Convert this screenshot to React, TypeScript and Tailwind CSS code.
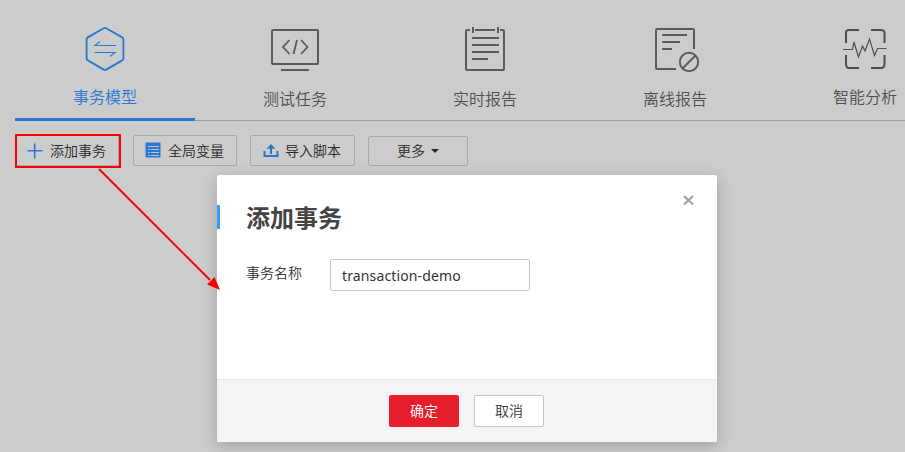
import type { ReactNode } from "react";

const HexIcon = () => (
  <svg width="44" height="48" viewBox="0 0 44 48" fill="none" stroke="#2878cf">
    <path transform="translate(0 -.6)" d="M20.8 3.9Q22 3.2 23.2 3.9L39.2 13Q40.4 13.7 40.4 15V34Q40.4 35.3 39.2 36L23.2 45.2Q22 45.9 20.8 45.2L4.8 36Q3.6 35.3 3.6 34V15Q3.6 13.7 4.8 13Z" strokeWidth="1.8" />
    <path d="M33 20.5H12L17 16.5M11.5 27.5H32L27 31.5" strokeWidth="1.1" />
  </svg>
);

const CodeIcon = () => (
  <svg width="50" height="48" viewBox="0 0 50 48" fill="none" stroke="#5b5b5b" strokeWidth="2">
    <rect x="2" y="5" width="46" height="34" rx="1" />
    <path d="M11 45H39" />
    <path d="M19.5 15L13 22L19.5 29M31 15L37.5 22L31 29M27 15L23.5 29" strokeWidth="1.8" />
  </svg>
);

const NoteIcon = () => (
  <svg width="44" height="48" viewBox="0 0 44 48" fill="none" stroke="#5b5b5b" strokeWidth="2">
    <path d="M7 5H4Q3 5 3 6V44Q3 45 4 45H40Q41 45 41 44V6Q41 5 40 5H37M12 5H32" />
    <path d="M10 2V8M35 2V8M9 13H36M9 20H36M9 27H36M9 34H25" />
  </svg>
);

const OfflineIcon = () => (
  <svg width="50" height="48" viewBox="0 0 50 48" fill="none" stroke="#5b5b5b" strokeWidth="2">
    <path d="M26 44H7Q6 44 6 43V5Q6 4 7 4H43Q44 4 44 5V24" />
    <path d="M12 10H37M12 17H30M12 24H22" />
    <circle cx="39" cy="37" r="9.2" strokeWidth="1.9" />
    <path d="M32.5 43.5L45.5 30.5" strokeWidth="1.9" />
  </svg>
);

const PulseIcon = () => (
  <svg width="44" height="48" viewBox="0 0 44 48" fill="none" stroke="#505050">
    <path d="M16 5H6Q3 5 3 8V18M28 5H38Q41.5 5 41.5 8V18M41.5 30V39Q41.5 43 38 43H28M16 43H6Q3 43 3 39V30" strokeWidth="2" />
    <path d="M0 24.5H9.5L11 17L15.5 32L19.5 21L22 26L26.5 14L31.5 30.5L34.5 23.5H43.5" strokeWidth="1.2" />
  </svg>
);

const PlusIcon = () => (
  <svg width="16" height="16" viewBox="0 0 16 16" fill="none" stroke="#2878cf" strokeWidth="1.5">
    <path d="M7.7 .5V15.5M.5 7.7H15.5" />
  </svg>
);

const TableIcon = () => (
  <svg className="-mt-[2px]" width="16" height="16" viewBox="0 0 16 16" fill="none">
    <rect x=".5" y=".5" width="15" height="15" fill="#2878cf" />
    <path d="M3 4.5H14M3 7.5H5M6 7.5H14M3 10.5H5M6 10.5H14M3 13.5H5M6 13.5H14" stroke="#b9c5d5" strokeWidth="1" />
  </svg>
);

const ImportIcon = () => (
  <svg width="16" height="16" viewBox="0 0 16 16" fill="#2878cf">
    <path d="M8 1L12.5 5.7H9V11H7V5.7H3.5Z" />
    <path d="M.5 8H2.5V12H13.5V8H15.5V14H.5Z" />
  </svg>
);

const tabs: { label: string; icon: ReactNode; style: string }[] = [
  { label: "事务模型", icon: <HexIcon />, style: "text-[#2878cf] pb-[12px]" },
  { label: "测试任务", icon: <CodeIcon />, style: "text-[#505050] pb-[10px]" },
  { label: "实时报告", icon: <NoteIcon />, style: "text-[#505050] pb-[10px]" },
  { label: "离线报告", icon: <OfflineIcon />, style: "text-[#505050] pb-[10px]" },
  { label: "智能分析", icon: <PulseIcon />, style: "text-[#505050] pb-[12px]" },
];

function Toolbar() {
  const button = "flex items-center rounded-xs border border-[#a9a9a9] text-[14px] text-[#292929]";
  return (
    <div className="flex h-[34px] items-start pl-[15px]">
      <button className="flex h-[34px] w-[106px] items-center gap-[7px] border-2 border-[#fa0000] pl-[10px] text-[14px] text-[#292929] shadow-[inset_-1px_-1px_0_#a9a9a9]">
        <PlusIcon />
        <span className="-mt-[2px]">添加事务</span>
      </button>
      <button className={`${button} mt-px ml-[12px] h-[31px] w-[104px] gap-[7px] pl-[11px]`}>
        <TableIcon />
        全局变量
      </button>
      <button className={`${button} mt-px ml-[13px] h-[31px] w-[105px] gap-[6px] pl-[12px]`}>
        <ImportIcon />
        导入脚本
      </button>
      <button className={`${button} mt-[2px] ml-[13px] h-[30px] w-[100px] gap-[6px] pl-[28px]`}>
        <span className="-mt-[2px]">更多</span>
        <span className="h-0 w-0 border-x-4 border-t-4 border-x-transparent border-t-[#292929]" />
      </button>
    </div>
  );
}

function Dialog() {
  return (
    <div className="absolute top-[175px] left-[217px] flex h-[267px] w-[500px] flex-col overflow-hidden rounded-xs bg-white text-[#333] shadow-[0_4px_16px_rgba(0,0,0,0.22)]">
      <div className="flex flex-1 flex-col">
        <div className="mt-[30px] flex h-[24px] items-center">
          <div className="h-[24px] w-[3px] bg-[#3b99fc]" />
          <h2 className="ml-[26px] flex-1 text-[24px] leading-[24px] font-bold text-[#444]">添加事务</h2>
          <button className="mr-[23px] -mt-[34px] p-0" aria-label="关闭">
            <svg width="12" height="12" viewBox="0 0 12 12" stroke="#a5a5a5" strokeWidth="2.4">
              <path d="M2 2L11 10.5M11 2L2 10.5" />
            </svg>
          </button>
        </div>
        <label className="mt-[30px] flex items-start pl-[29px] text-[14px]">
          <span className="w-[84px] pt-[3px] leading-[20px]">事务名称</span>
          <input
            className="h-[32px] w-[200px] rounded-xs border border-[#c6c6c6] bg-white px-[11px] font-['Noto_Sans',sans-serif] text-[14px] font-normal tracking-[0.13px] outline-none"
            defaultValue="transaction-demo"
          />
        </label>
      </div>
      <div className="flex h-[63px] items-start gap-[15px] border-t border-[#e9e9e9] bg-[#f4f4f4] pt-[15px] pl-[172px] text-[14px]">
        <button className="h-[32px] w-[70px] rounded-xs bg-[#e61e2b] pb-[2px] text-white">确定</button>
        <button className="h-[32px] w-[70px] rounded-xs border border-[#c6c6c6] bg-white pb-[2px]">取消</button>
      </div>
    </div>
  );
}

export default function App() {
  return (
    <div className="relative h-[452px] w-[905px] overflow-hidden bg-[#ccc] font-['Noto_Sans_CJK_SC',sans-serif] font-[350]">
      <nav className="ml-[15px] flex h-[121px] w-[950px] gap-[10px] border-b border-[#9f9f9f]">
        {tabs.map((tab, i) => (
          <div key={tab.label} className={`flex h-[121px] w-[180px] shrink-0 flex-col items-center justify-between pt-[25px] ${tab.style} ${i === 0 ? "border-b-[3px] border-[#2878cf]" : "border-b-[3px] border-transparent"}`}>
            {tab.icon}
            <span className="text-[16px] leading-[20px]">{tab.label}</span>
          </div>
        ))}
      </nav>
      <div className="mt-[13px]">
        <Toolbar />
      </div>
      <Dialog />
      <svg className="pointer-events-none absolute top-[165px] left-[95px]" width="130" height="130" viewBox="0 0 130 130">
        <path d="M4 4L115 115" stroke="#f00000" strokeWidth="1.8" />
        <path d="M125 125L112 119.5L119.5 112Z" fill="#fa0000" />
      </svg>
    </div>
  );
}
